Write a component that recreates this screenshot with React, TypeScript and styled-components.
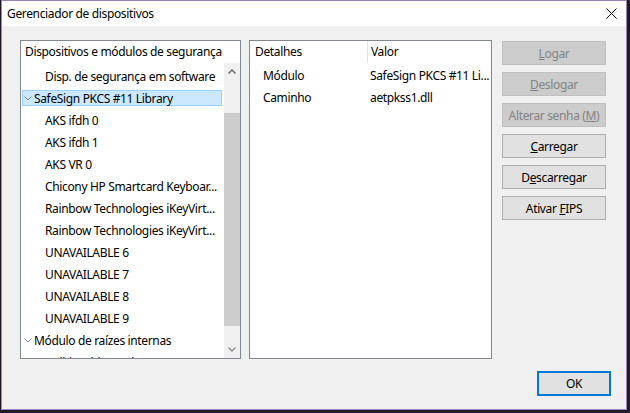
import React from 'react'
import styled, { createGlobalStyle } from 'styled-components'

const GlobalStyle = createGlobalStyle`
  html, body {
    margin: 0;
    padding: 0;
    background: #231a28;
    width: 630px;
    height: 413px;
    overflow: hidden;
  }
  body {
    font-family: "Segoe UI", "Noto Sans", sans-serif;
    font-size: 12px;
    letter-spacing: -0.35px;
    color: #000;
  }
`

const Window = styled.div`
  box-sizing: border-box;
  margin-left: 1px;
  width: 626px;
  height: 410px;
  border: 1px solid #9b83bf;
  background: #f0f0f0;
  display: flex;
  flex-direction: column;
`

const TitleBar = styled.div`
  height: 25px;
  background: #fff;
  display: flex;
  align-items: center;
  justify-content: space-between;
  padding: 0 9px 0 5px;
`

const Title = styled.span`
  font-size: 12px;
  line-height: 16px;
`

const Client = styled.div`
  flex: 1;
  display: flex;
  flex-direction: column;
  padding: 14px 15px 0 18px;
`

const Main = styled.div`
  display: flex;
  align-items: flex-start;
`

const Panel = styled.div<{ $width: number }>`
  box-sizing: border-box;
  width: ${p => p.$width}px;
  height: 319px;
  border: 1px solid #828790;
  background: #fff;
  overflow: hidden;
  display: flex;
  flex-direction: column;
`

const TreeHeader = styled.div`
  height: 22px;
  line-height: 22px;
  padding-left: 4px;
  flex: none;
  white-space: nowrap;
`

const TreeBody = styled.div`
  flex: 1;
  display: flex;
  min-height: 0;
`

const TreeList = styled.div`
  flex: 1;
  padding-top: 2px;
  overflow: hidden;
`

const TreeRow = styled.div<{ $level: number }>`
  height: 22px;
  display: flex;
  align-items: center;
  padding-left: ${p => (p.$level === 0 ? 1 : 22)}px;
  white-space: nowrap;
`

const RowLabel = styled.div<{ $selected?: boolean }>`
  box-sizing: border-box;
  height: 16px;
  flex: 1;
  margin-right: 2px;
  display: flex;
  align-items: center;
  gap: 2px;
  padding-left: 1px;
  border: 1px solid ${p => (p.$selected ? '#99d1ff' : 'transparent')};
  background: ${p => (p.$selected ? '#cce8ff' : 'transparent')};
`

const ScrollBar = styled.div`
  width: 16px;
  flex: none;
  background: #f0f0f0;
  display: flex;
  flex-direction: column;
`

const ScrollArrow = styled.div`
  height: 17px;
  display: flex;
  align-items: center;
  justify-content: center;
  flex: none;
`

const ScrollTrack = styled.div`
  flex: 1;
  padding: 33px 0 15px;
  display: flex;
`

const Thumb = styled.div`
  flex: 1;
  background: #cdcdcd;
`

const DetailsHeader = styled.div`
  display: grid;
  grid-template-columns: 117px 1fr;
  height: 22px;
  line-height: 22px;
  flex: none;
`

const HeaderCell = styled.div<{ $divider?: boolean }>`
  border-left: ${p => (p.$divider ? '1px solid #e5e5e5' : 'none')};
  padding-left: ${p => (p.$divider ? 3 : 5)}px;
`

const DetailsList = styled.div`
  padding-top: 2px;
`

const DetailsRow = styled.div`
  display: grid;
  grid-template-columns: 117px 1fr;
  height: 22px;
  line-height: 22px;
  white-space: nowrap;
`

const Cell = styled.div<{ $indent: number }>`
  padding-left: ${p => p.$indent}px;
  overflow: hidden;
`

const Buttons = styled.div`
  margin-left: 10px;
  padding-top: 1px;
  display: flex;
  flex-direction: column;
  gap: 7px;
`

const Button = styled.div<{ $disabled?: boolean }>`
  box-sizing: border-box;
  width: 104px;
  height: 24px;
  display: flex;
  align-items: center;
  justify-content: center;
  border: 1px solid ${p => (p.$disabled ? '#bfbfbf' : '#adadad')};
  background: ${p => (p.$disabled ? '#cccccc' : '#e1e1e1')};
  color: ${p => (p.$disabled ? '#838383' : '#000')};
  white-space: nowrap;
`

const Footer = styled.div`
  display: flex;
  justify-content: flex-end;
  padding-top: 12px;
`

const OkButton = styled.div`
  box-sizing: border-box;
  width: 74px;
  height: 25px;
  border: 2px solid #0078d7;
  background: #e1e1e1;
  display: flex;
  align-items: center;
  justify-content: center;
`

const Chevron = ({ up }: { up?: boolean }) => (
  <svg width="8" height="5" viewBox="0 0 8 5">
    <path
      d={up ? 'M0.5 4.5 L4 1 L7.5 4.5' : 'M0.5 0.5 L4 4 L7.5 0.5'}
      fill="none"
      stroke={up ? '#606060' : '#8a8a8a'}
      strokeWidth="1.3"
    />
  </svg>
)

const TreeChevron = () => (
  <svg width="8" height="5" viewBox="0 0 8 5" style={{ flex: 'none' }}>
    <path d="M0.5 0.5 L4 4 L7.5 0.5" fill="none" stroke="#848484" strokeWidth="1" />
  </svg>
)

const CloseIcon = () => (
  <svg width="11" height="11" viewBox="0 0 11 11">
    <path d="M0.5 0.5 L10.5 10.5 M10.5 0.5 L0.5 10.5" stroke="#000" strokeWidth="1" />
  </svg>
)

type TreeItem = { label: string; level: number; selected?: boolean }

const treeItems: TreeItem[] = [
  { label: 'Disp. de segurança em software', level: 1 },
  { label: 'SafeSign PKCS #11 Library', level: 0, selected: true },
  { label: 'AKS ifdh 0', level: 1 },
  { label: 'AKS ifdh 1', level: 1 },
  { label: 'AKS VR 0', level: 1 },
  { label: 'Chicony HP Smartcard Keyboar...', level: 1 },
  { label: 'Rainbow Technologies iKeyVirt...', level: 1 },
  { label: 'Rainbow Technologies iKeyVirt...', level: 1 },
  { label: 'UNAVAILABLE 6', level: 1 },
  { label: 'UNAVAILABLE 7', level: 1 },
  { label: 'UNAVAILABLE 8', level: 1 },
  { label: 'UNAVAILABLE 9', level: 1 },
  { label: 'Módulo de raízes internas', level: 0 },
  { label: 'Builtin Object Token', level: 1 },
]

const details = [
  ['Módulo', 'SafeSign PKCS #11 Li...'],
  ['Caminho', 'aetpkss1.dll'],
]

const buttons: { pre: string; key: string; post: string; disabled?: boolean }[] = [
  { pre: '', key: 'L', post: 'ogar', disabled: true },
  { pre: '', key: 'D', post: 'eslogar', disabled: true },
  { pre: 'Alterar senha (', key: 'M', post: ')', disabled: true },
  { pre: '', key: 'C', post: 'arregar' },
  { pre: 'D', key: 'e', post: 'scarregar' },
  { pre: 'Ativar ', key: 'F', post: 'IPS' },
]

export default function App() {
  return (
    <>
      <GlobalStyle />
      <Window>
        <TitleBar>
          <Title>Gerenciador de dispositivos</Title>
          <CloseIcon />
        </TitleBar>
        <Client>
          <Main>
            <Panel $width={221}>
              <TreeHeader>Dispositivos e módulos de segurança</TreeHeader>
              <TreeBody>
                <TreeList>
                  {treeItems.map((item, i) => (
                    <TreeRow key={i} $level={item.level}>
                      <RowLabel $selected={item.selected}>
                        {item.level === 0 && <TreeChevron />}
                        <span>{item.label}</span>
                      </RowLabel>
                    </TreeRow>
                  ))}
                </TreeList>
                <ScrollBar>
                  <ScrollArrow>
                    <Chevron up />
                  </ScrollArrow>
                  <ScrollTrack>
                    <Thumb />
                  </ScrollTrack>
                  <ScrollArrow>
                    <Chevron />
                  </ScrollArrow>
                </ScrollBar>
              </TreeBody>
            </Panel>
            <Panel $width={243} style={{ marginLeft: 8 }}>
              <DetailsHeader>
                <HeaderCell>Detalhes</HeaderCell>
                <HeaderCell $divider>Valor</HeaderCell>
              </DetailsHeader>
              <DetailsList>
                {details.map(([k, v]) => (
                  <DetailsRow key={k}>
                    <Cell $indent={13}>{k}</Cell>
                    <Cell $indent={3}>{v}</Cell>
                  </DetailsRow>
                ))}
              </DetailsList>
            </Panel>
            <Buttons>
              {buttons.map((b, i) => (
                <Button key={i} $disabled={b.disabled}>
                  <span>
                    {b.pre}
                    <u>{b.key}</u>
                    {b.post}
                  </span>
                </Button>
              ))}
            </Buttons>
          </Main>
          <Footer>
            <OkButton>OK</OkButton>
          </Footer>
        </Client>
      </Window>
    </>
  )
}
